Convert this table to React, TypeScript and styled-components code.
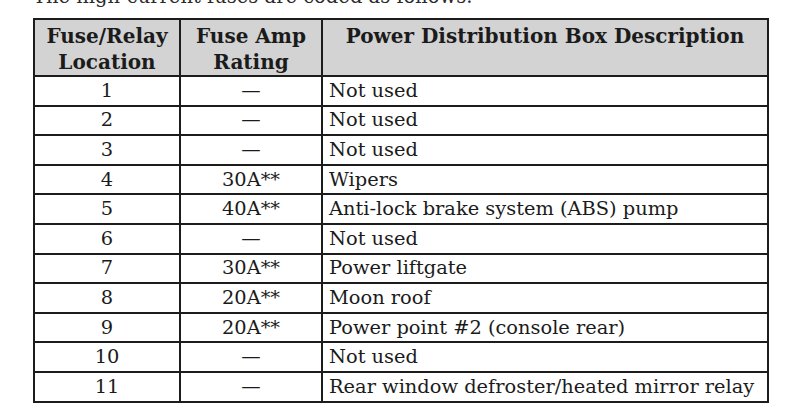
import React from 'react'
import styled, { createGlobalStyle } from 'styled-components'

const GlobalStyle = createGlobalStyle`
  html, body {
    margin: 0;
    padding: 0;
    background: #fff;
  }
  body {
    width: 798px;
    height: 418px;
    overflow: hidden;
  }
`

const Page = styled.div`
  padding-left: 33px;
  font-family: 'DejaVu Serif', serif;
  color: #1b1b1b;
`

const Intro = styled.p`
  margin: -15px 0 0;
  height: 33px;
  font-size: 19.5px;
  line-height: 24px;
  color: #2a2a2a;
`

const FuseTable = styled.table`
  width: 734px;
  table-layout: fixed;
  border-collapse: collapse;
  border: 2.5px solid #1c1c1c;
`

const HeadCell = styled.th<{ $w: number }>`
  width: ${(p) => p.$w}px;
  height: 56px;
  padding: 3px 4px 0;
  box-sizing: border-box;
  background: #d3d3d3;
  border: 2.5px solid #1c1c1c;
  vertical-align: top;
  text-align: center;
  font-size: 20px;
  font-weight: bold;
  line-height: 26px;
`

const Row = styled.tr`
  height: 29.6px;
`

const Cell = styled.td<{ $align?: 'left' | 'center' }>`
  padding: 0 6px;
  border: 2.5px solid #1c1c1c;
  text-align: ${(p) => p.$align ?? 'center'};
  font-size: 19.4px;
  line-height: 24px;
  white-space: nowrap;
  vertical-align: middle;
`

const fuses: [string, string, string][] = [
  ['1', '—', 'Not used'],
  ['2', '—', 'Not used'],
  ['3', '—', 'Not used'],
  ['4', '30A**', 'Wipers'],
  ['5', '40A**', 'Anti-lock brake system (ABS) pump'],
  ['6', '—', 'Not used'],
  ['7', '30A**', 'Power liftgate'],
  ['8', '20A**', 'Moon roof'],
  ['9', '20A**', 'Power point #2 (console rear)'],
  ['10', '—', 'Not used'],
  ['11', '—', 'Rear window defroster/heated mirror relay'],
]

const App = () => (
  <>
    <GlobalStyle />
    <Page>
      <Intro>The high-current fuses are coded as follows.</Intro>
      <FuseTable>
        <thead>
          <tr>
            <HeadCell $w={146}>
              Fuse/Relay
              <br />
              Location
            </HeadCell>
            <HeadCell $w={142}>
              Fuse Amp
              <br />
              Rating
            </HeadCell>
            <HeadCell $w={446}>Power Distribution Box Description</HeadCell>
          </tr>
        </thead>
        <tbody>
          {fuses.map(([loc, amp, desc]) => (
            <Row key={loc}>
              <Cell>{loc}</Cell>
              <Cell>{amp}</Cell>
              <Cell $align="left">{desc}</Cell>
            </Row>
          ))}
        </tbody>
      </FuseTable>
    </Page>
  </>
)

export default App
